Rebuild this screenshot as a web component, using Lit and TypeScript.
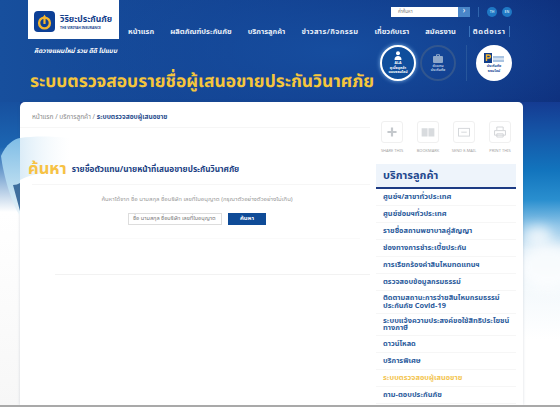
import { LitElement, html, css, svg } from "lit";
import { customElement } from "lit/decorators.js";

const NAV: [string, string][] = [["หน้าแรก", ""], ["ผลิตภัณฑ์ประกันภัย", ""], ["บริการลูกค้า", ""], ["ข่าวสาร/กิจกรรม", "wide"], ["เกี่ยวกับเรา", ""], ["สมัครงาน", ""]];
const MENU: [string[], string][] = [
  [["ศูนย์ฯ/สาขาทั่วประเทศ"], ""],
  [["ศูนย์ซ่อมฯทั่วประเทศ"], ""],
  [["รายชื่อสถานพยาบาลคู่สัญญา"], ""],
  [["ช่องทางการชำระเบี้ยประกัน"], ""],
  [["การเรียกร้องค่าสินไหมทดแทนฯ"], ""],
  [["ตรวจสอบข้อมูลกรมธรรม์"], ""],
  [["ติดตามสถานะการจ่ายสินไหมกรมธรรม์", "ประกันภัย Covid-19"], "two"],
  [["ระบบแจ้งความประสงค์ขอใช้สิทธิประโยชน์", "ทางภาษี"], "two"],
  [["ดาวน์โหลด"], ""],
  [["บริการพิเศษ"], ""],
  [["ระบบตรวจสอบผู้เสนอขาย"], "on"],
  [["ถาม-ตอบประกันภัย"], ""],
];
const SHARE: [string, unknown][] = [
  ["SHARE THIS", svg`<path d="M11 6v10M6 11h10" stroke="#c4c8cc" stroke-width="2.4"/>`],
  ["BOOKMARK", svg`<path d="M4 7h6.5v9H4zM11.5 7H18v9h-6.5z" fill="#d8dbde"/>`],
  ["SEND E-MAIL", svg`<rect x="5" y="7" width="12" height="8.5" fill="none" stroke="#d2d5d8"/><path d="M8 11.2h6" stroke="#d2d5d8"/>`],
  ["PRINT THIS", svg`<path d="M7.5 9V5.5h7V9M5 9.5h12v5H5zM7.5 13h7v3.5h-7z" fill="#fff" stroke="#cfd2d5"/>`],
];

@customElement("app-root")
export class AppRoot extends LitElement {
  static styles = css`
    :host { display: block; width: 560px; height: 407px; overflow: hidden; font-family: "Noto Sans Thai", "Noto Sans", "DejaVu Sans", sans-serif; }
    * { box-sizing: border-box; }
    .page { position: relative; height: 407px; display: flex; flex-direction: column; overflow: hidden;
      background: linear-gradient(180deg, #14318a 90px, #1553a5 130px, #1274bd 170px, #2a8fcf 200px, #8fc5e8 225px, #dcecf7 250px, #f4f9fc 290px, #fff 340px);
      border-bottom: 2px solid #a9a9a9; }
    .cloud { position: absolute; border-radius: 50%; background: #fff; filter: blur(6px); opacity: .75; }
    .c1 { left: 524px; top: 226px; width: 28px; height: 20px; }
    .c2 { left: 518px; top: 244px; width: 60px; height: 46px; }
    .left { position: absolute; left: 0; top: 102px; width: 20px; height: 303px;
      background: linear-gradient(180deg, #17509f 0, #1c66b2 45px, #fff 110px, #f7f7f7 303px); }
    .swoosh { position: absolute; left: 0; top: 130px; width: 70px; height: 90px; z-index: 2; pointer-events: none; }
    .head { flex: 0 0 102px; display: flex; flex-direction: column; position: relative;
      background: radial-gradient(ellipse 300px 90px at 60% 50%, #164d9f, transparent), linear-gradient(90deg, #174f9d, #123f8e 50%, #0e2f7c); }
    .top { display: flex; height: 39px; padding-left: 28px; }
    .logo { width: 91px; height: 39px; background: #fff; display: flex; align-items: center; gap: 5px; padding: 4px 5px 0 6px; }
    .logo-mark { width: 21px; height: 21px; flex: none; }
    .brand { display: flex; flex-direction: column; }
    .brand b { font-size: 8.6px; line-height: 11px; color: #123d8a; white-space: nowrap; }
    .brand i { font-style: normal; font-weight: 700; font-size: 3.3px; line-height: 5px; color: #123d8a; white-space: nowrap; }
    .right { flex: 1; display: flex; flex-direction: column; padding-left: 9px; }
    .tools { height: 23px; display: flex; align-items: flex-start; padding: 7px 0 0 263px; }
    .search { width: 79px; height: 10px; background: #fff; display: flex; font-size: 4.5px; line-height: 10px; color: #777; padding-left: 7px; }
    .search span { flex: 1; }
    .go { width: 12px; background: #4a86c8; color: #fff; text-align: center; font-size: 8px; line-height: 9px; }
    .vr { width: 1px; height: 10px; margin: 0 8px; background: #2f65ad; }
    .lang { width: 10px; height: 10px; border-radius: 50%; background: #1f78c4; color: #bde; font-size: 3.5px; line-height: 10px; text-align: center; font-weight: 700; margin-right: 5px; }
    nav { display: flex; align-items: center; height: 16px; gap: 16px; font-size: 7.5px; font-weight: 700; color: #e8eef8; white-space: nowrap; }
    nav .wide { letter-spacing: .35px; }
    nav .last { border-left: 1px solid #3a74bd; border-right: 1px solid #3a74bd; padding: 0 3px; margin-left: -3px; letter-spacing: .6px; }
    .mid { display: flex; height: 63px; }
    .copy { width: 350px; padding: 7px 0 0 30px; display: flex; flex-direction: column; gap: 13px; }
    .tag { font-size: 6.4px; font-style: italic; line-height: 11px; color: #fff; font-weight: 700; padding-left: 4px; white-space: nowrap; }
    h1 { margin: 0; font-size: 17.4px; line-height: 24px; color: #f5c63c; font-weight: 700; white-space: nowrap; text-rendering: geometricPrecision; }
    .bubbles { display: flex; align-items: flex-start; padding-top: 6px; }
    .bub { width: 36px; height: 36px; border-radius: 50%; flex: none; display: flex; flex-direction: column; align-items: center; justify-content: center; color: #fff; font-size: 3.6px; line-height: 4.5px; font-weight: 700; text-align: center; white-space: nowrap; }
    .bub svg { display: block; margin-bottom: 1px; }
    .b1 { background: #0f4e9c; border: 2px solid #fff; margin-left: 30px; box-shadow: 0 0 4px #7fb4e6; }
    .b2 { border: 2px solid #31568f; margin-left: 4px; color: #b5c8e2; }
    .b3 { background: #fff; color: #1b4d96; margin-left: 37px; }
    .sep { width: 1px; height: 36px; background: #27569b; margin-left: 10px; margin-right: -28px; }
    .card { flex: 1; margin: 0 37px 0 20px; background: #fff; border-radius: 5px 5px 0 0; display: flex; position: relative; box-shadow: 0 0 3px rgba(60,80,110,.2); }
    .main { width: 350px; padding: 11px 0 0 12px; display: flex; flex-direction: column; }
    .crumb { font-size: 6.6px; line-height: 9px; color: #8a8a8a; white-space: nowrap; }
    .crumb b { color: #2a4e8e; }
    .rule { height: 1px; background: #f6f6f6; }
    .r1 { margin: 5px 0 0 -12px; }
    .hline { display: flex; align-items: center; height: 30px; margin-top: 26px; gap: 5px; white-space: nowrap; margin-left: -4px; position: relative; z-index: 3; }
    .hline strong { font-size: 16.5px; line-height: 30px; color: #f7c244; font-weight: 700; }
    .hline span { font-size: 8.2px; color: #213f83; font-weight: 700; }
    .hint { margin-top: 10px; padding-right: 8px; text-align: center; font-size: 6px; line-height: 10px; color: #9a9a9a; white-space: nowrap; }
    .form { display: flex; justify-content: center; gap: 6px; margin-top: 8px; padding-right: 8px; }
    .field { width: 94px; height: 12px; border: 1px solid #ddd; font-size: 5.6px; line-height: 10px; color: #777; padding-left: 4px; white-space: nowrap; overflow: hidden; }
    .btn { width: 38px; height: 12px; background: #0f4b97; color: #fff; font-size: 6px; line-height: 11px; text-align: center; font-weight: 700; }
    .r3 { margin: 13px 10px 0 8px; background: #fafafa; }
    .r4 { margin: 35px 0 0 23px; background: #f2f2f2; }
    aside { flex: 1; padding: 19px 7px 0 6px; }
    .share { display: flex; gap: 14px; padding-left: 5px; }
    .sh { width: 22px; display: flex; flex-direction: column; align-items: center; gap: 6px; }
    .sh svg { width: 22px; height: 22px; display: block; border: 1px solid #f0f0f0; border-radius: 3px; }
    .sh span { font-size: 4px; line-height: 5px; color: #a5a5a5; white-space: nowrap; }
    .sb { height: 25px; margin-top: 10px; background: #eef4fb; border-bottom: 2px solid #1d3b84; padding-left: 7px; font-size: 11px; line-height: 23px; font-weight: 700; color: #23488e; }
    ul { list-style: none; margin: 0; padding: 0; }
    li { height: 17px; padding-left: 7px; display: flex; flex-direction: column; justify-content: center; border-bottom: 1px solid #f6f6f6; font-size: 7.4px; line-height: 7.5px; font-weight: 700; color: #2c5c9c; white-space: nowrap; }
    li.two { height: 22.5px; }
    li.on { color: #f3c552; }
  `;

  render() {
    return html`<div class="page">
      <div class="left"></div>
      <div class="cloud c1"></div><div class="cloud c2"></div>
      <svg class="swoosh" viewBox="0 0 70 90">
        <defs>
          <linearGradient id="sw1" x1="0" y1="0" x2="0" y2="1"><stop offset="0" stop-color="#7fbde6"/><stop offset=".6" stop-color="#b9dcf0"/><stop offset="1" stop-color="#eef6fa"/></linearGradient>
          <linearGradient id="sw2" x1="0" y1="0" x2="1" y2="0"><stop offset="0" stop-color="#cfe6f5" stop-opacity=".75"/><stop offset="1" stop-color="#eef6fb" stop-opacity="0"/></linearGradient>
        </defs>
        <path d="M1 26C6 14 14 9 20 8v78C12 74 4 48 1 26z" fill="url(#sw1)"/>
        <path d="M13 55c3 0 5-1 7-2v28z" fill="#3f6f9e"/>
        <path d="M20 8c14-2 30-2 50 0v36c-18-2-36-2-50 6z" fill="url(#sw2)"/>
      </svg>
      <header class="head">
        <div class="top">
          <div class="logo">
            <svg class="logo-mark" viewBox="0 0 21 21"><rect width="21" height="21" rx="4" fill="#0c3f96"/><circle cx="10.5" cy="12" r="5.4" fill="none" stroke="#f3b52f" stroke-width="2.4"/><path d="M10.5 3.5l2.6 4.5h-1.5v5h-2.2V8H7.9z" fill="#f3b52f"/></svg>
            <div class="brand"><b>วิริยะประกันภัย</b><i>THE VIRIYAH INSURANCE</i></div>
          </div>
          <div class="right">
            <div class="tools">
              <div class="search"><span>คำค้นหา</span><div class="go">›</div></div>
              <div class="vr"></div>
              <div class="lang">TH</div><div class="lang">EN</div>
            </div>
            <nav>${NAV.map(([n, c]) => html`<span class=${c}>${n}</span>`)}<span class="last">ติดต่อเรา</span></nav>
          </div>
        </div>
        <div class="mid">
          <div class="copy">
            <div class="tag">คิดวางแผนใหม่ รวม ดีดี ไปแบบ</div>
            <h1>ระบบตรวจสอบรายชื่อผู้เสนอขายประกันวินาศภัย</h1>
          </div>
          <div class="bubbles">
            <div class="bub b1"><svg width="8" height="9" viewBox="0 0 8 9"><circle cx="4" cy="2.2" r="2" fill="#fff"/><path d="M.5 9c0-3 1.500-4 3.500-4s3.500 1 3.500 4z" fill="#fff"/></svg><span>ALA</span><span>ดูเบี้ยลูกค้า</span><span>แบบออนไลน์</span></div>
            <div class="bub b2"><svg width="10" height="9" viewBox="0 0 10 9"><path d="M3.500 2V.7h3V2" fill="none" stroke="#8ea7c9"/><rect y="2" width="10" height="7" rx="1" fill="#8ea7c9"/></svg><span>ตัวแทน</span><span>ประกันภัย</span></div>
            <div class="sep"></div>
            <div class="bub b3"><svg width="20" height="10" viewBox="0 0 20 10"><rect width="8" height="10" fill="#123d8a"/><path d="M2.500 8V2h2.500a1.500 1.500 0 0 1 0 3H2.500" fill="none" stroke="#f3b52f" stroke-width="1.400"/><rect x="9" y="3" width="11" height="2.500" fill="#a9c4e2"/><rect x="9" y="6.500" width="11" height="2.500" fill="#a9c4e2"/></svg><span>ประกันภัย</span><span>ออนไลน์</span></div>
          </div>
        </div>
      </header>
      <section class="card">
        <div class="main">
          <div class="crumb">หน้าแรก / บริการลูกค้า / <b>ระบบตรวจสอบผู้เสนอขาย</b></div>
          <div class="rule r1"></div>
          <div class="hline"><strong>ค้นหา</strong><span>รายชื่อตัวแทน/นายหน้าที่เสนอขายประกันวินาศภัย</span></div>
          <div class="rule"></div>
          <div class="hint">ค้นหาได้จาก ชื่อ นามสกุล ชื่อบริษัท เลขที่ใบอนุญาต (กรุณาตัวอย่างตัวอย่างไม่เกิน)</div>
          <div class="form"><div class="field">ชื่อ นามสกุล ชื่อบริษัท เลขที่ใบอนุญาต</div><div class="btn">ค้นหา</div></div>
          <div class="rule r3"></div>
          <div class="rule r4"></div>
        </div>
        <aside>
          <div class="share">${SHARE.map(([t, i]) => html`<div class="sh"><svg viewBox="0 0 22 22">${i}</svg><span>${t}</span></div>`)}</div>
          <div class="sb">บริการลูกค้า</div>
          <ul>${MENU.map(([t, c]) => html`<li class=${c}>${t.map((x) => html`<span>${x}</span>`)}</li>`)}</ul>
        </aside>
      </section>
    </div>`;
  }
}
